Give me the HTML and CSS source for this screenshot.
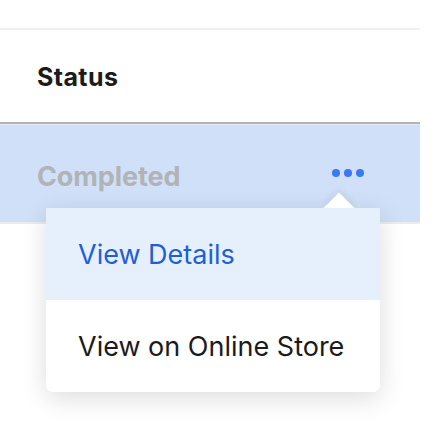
FILE: index.html
```html
<!DOCTYPE html>
<html>
<head>
<meta charset="utf-8">
<link rel="stylesheet" href="styles.css">
</head>
<body>
<div class="panel">
  <div class="top-rule"></div>
  <h2 class="title">Status</h2>
  <div class="row">
    <span class="status">Completed</span>
    <button class="more" aria-label="More"><span></span><span></span><span></span></button>
    <div class="menu">
      <div class="arrow"></div>
      <div class="item active">View Details</div>
      <div class="item">View on Online Store</div>
    </div>
  </div>
</div>
</body>
</html>
```
FILE: styles.css
```css
* { box-sizing: border-box; }
html, body { margin: 0; padding: 0; background: #fff; }
body { font-family: Inter, "Liberation Sans", Arial, sans-serif; width: 440px; height: 426px; overflow: hidden; }
.panel { width: 420px; padding-top: 28px; }
.top-rule { height: 2px; background: #f1f1f1; }
.title {
  margin: 0;
  height: 94px;
  padding: 32px 0 0 37px;
  font-size: 25px;
  font-weight: 700;
  letter-spacing: 0.4px;
  color: #1b1b1b;
  line-height: 30px;
  border-bottom: 2px solid #b3b3b3;
}
.row {
  position: relative;
  height: 100px;
  background: #cfe0f8;
  border-top: 1px solid #e3ebf7;
  border-bottom: 2px solid #ececec;
  display: flex;
  align-items: flex-start;
  justify-content: space-between;
  padding: 35px 56px 0 37px;
}
.status { font-size: 27px; font-weight: 700; color: #b1b3b6; line-height: 34px; letter-spacing: -0.1px; }
.more {
  border: 0; background: none; padding: 0; margin-top: 9px;
  display: flex; gap: 4px;
}
.more span { width: 8px; height: 8px; border-radius: 50%; background: #3a79f3; }
.menu {
  position: absolute;
  left: 46px;
  top: 83px;
  width: 334px;
  background: #fff;
  border-radius: 0 0 7px 7px;
  box-shadow: 0 6px 26px rgba(0,0,0,0.14);
  z-index: 2;
}
.arrow {
  position: absolute;
  left: 282px;
  top: -11px;
  width: 22px;
  height: 22px;
  background: #fff;
  transform: rotate(45deg);
  box-shadow: -3px -3px 6px rgba(0,0,0,0.05);
}
.item {
  position: relative;
  height: 92px;
  padding: 0 32px;
  display: flex;
  align-items: center;
  font-size: 27px;
  color: #1b1b1b;
  background: #fff;
  border-radius: 0 0 7px 7px;
}
.item.active { background: #e6f0fd; color: #1e5fd6; border-radius: 0; }
```
